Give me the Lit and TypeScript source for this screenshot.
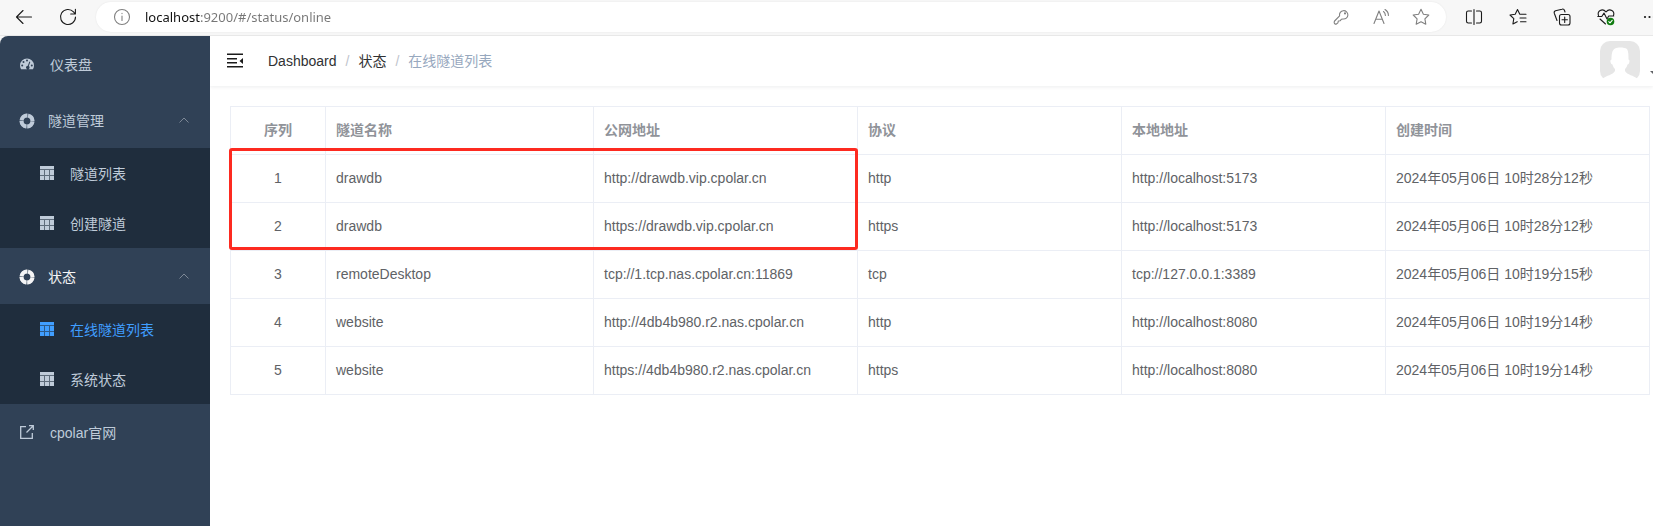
import { LitElement, html, css, svg, nothing } from "lit";
import { customElement, state } from "lit/decorators.js";
import { classMap } from "lit/directives/class-map.js";

const CJK = css`"Liberation Sans", "Noto Sans CJK SC", sans-serif`;

const gridIcon = html`<svg class="icon" width="14" height="14" viewBox="0 0 14 14" aria-hidden="true">
  <path fill="currentColor" opacity=".4" d="M0 0h14v14H0z"/>
  <path fill="currentColor" d="M0 0h14v3H0zM0 4h4v5H0zM5 4h4v5H5zM10 4h4v5h-4zM0 10h4v4H0zM5 10h4v4H5zM10 10h4v4h-4z"/>
</svg>`;

const ringIcon = html`<svg class="icon" width="16" height="16" viewBox="0 0 16 16" aria-hidden="true">
  <circle cx="8" cy="8" r="5.500" fill="none" stroke="currentColor" stroke-width="4" opacity=".4"/>
  <circle cx="8" cy="8" r="5.500" fill="none" stroke="currentColor" stroke-width="4" stroke-dasharray="7.640 1" stroke-dashoffset="-.5"/>
</svg>`;

const gaugeIcon = html`<svg class="icon" width="14" height="14" viewBox="0 0 14 14" aria-hidden="true">
  <path fill="currentColor" fill-rule="evenodd" d="M7 1.400a7 7 0 0 0-7 7c0 1.500.4 2.800 1.100 3.900h11.800A7 7 0 0 0 14 8.400a7 7 0 0 0-7-7zM7 2.600a1 1 0 1 1 0 2 1 1 0 0 1 0-2zM3.500 4a1 1 0 1 1 0 2 1 1 0 0 1 0-2zM2.200 7.500a1 1 0 1 1 0 2 1 1 0 0 1 0-2zM11.800 7.500a1 1 0 1 1 0 2 1 1 0 0 1 0-2zM9.400 4.600l.9.400-1.500 4a1.800 1.800 0 1 1-1-.3z"/>
</svg>`;

const linkIcon = html`<svg class="icon" width="14" height="14" viewBox="0 0 14 14" aria-hidden="true">
  <path fill="none" stroke="currentColor" stroke-width="1.300" d="M6 1.700H.7v11.600h11.600V8M6.500 7.500L13 1M9 .7h4.300V5"/>
</svg>`;

const chevron = html`<svg class="chevron" width="10" height="6" viewBox="0 0 10 6" aria-hidden="true">
  <path fill="none" stroke="currentColor" d="M.5 5.500L5 1l4.500 4.500"/>
</svg>`;

const stroke = (body: unknown) => html`<svg width="20" height="20" viewBox="0 0 20 20" fill="none" stroke="currentColor" stroke-width="1.100" stroke-linecap="round" stroke-linejoin="round" aria-hidden="true">${body}</svg>`;

@customElement("browser-bar")
export class BrowserBar extends LitElement {
  static styles = css`
    :host { display: block; background: #f7f7f7; border-bottom: 1px solid #e8e8e8; }
    .bar { display: flex; align-items: center; height: 35px; padding: 0 0 1px 14px; overflow: hidden; box-sizing: border-box; }
    button { display: flex; flex: none; border: 0; padding: 0; background: none; color: #1b1b1b; }
    .back { margin-right: 24px; }
    .reload { margin-right: 18px; }
    .address { display: flex; align-items: center; flex: 1; min-width: 0; height: 30px; border-radius: 15px; background: #fff; padding: 0 15px 0 16px; box-shadow: 0 0 2px rgba(0, 0, 0, 0.08); box-sizing: border-box; }
    .address button { color: #808080; margin-left: 20px; }
    .address .info { margin-left: 0; }
    input { flex: 1; min-width: 0; border: 0; outline: 0; padding: 0; margin-left: 13px; height: 24px; font: 13px/24px "Noto Sans", "Open Sans", sans-serif; color: #6e6e6e; background: linear-gradient(90deg, #111 56px, #767676 56px); -webkit-background-clip: text; background-clip: text; -webkit-text-fill-color: transparent; }
    .tools { display: flex; flex: none; gap: 24px; margin-left: 18px; width: 189px; overflow: hidden; }
  `;
  render() {
    return html`<div class="bar">
      <button class="back" aria-label="Back">${stroke(svg`<path d="M17.500 10H2.500M9 3.500L2.500 10 9 16.500"/>`)}</button>
      <button class="reload" aria-label="Reload">${stroke(svg`<path d="M17.500 10a7.500 7.500 0 1 1-2-5.100L17.300 7M17.400 2.300V7h-4.700"/>`)}</button>
      <div class="address">
        <button class="info" aria-label="Site information">${stroke(svg`<circle cx="10" cy="10" r="7.500"/><path d="M10 9v4.500M10 6.300v.3"/>`)}</button>
        <input aria-label="Address" value="localhost:9200/#/status/online" />
        <button aria-label="Passwords">${stroke(svg`<path d="M8.600 8.800A4.200 4.200 0 1 1 12 12l-1.500.2-1.400 1.600-1.800.2-.4 1.900-1.500 1.100c-1 .5-2.600-.6-2.200-2l.4-1z"/><circle cx="14" cy="6.400" r=".5"/>`)}</button>
        <button aria-label="Read aloud">${stroke(svg`<path d="M3 16.500L8 4l5 12.500M4.800 12.200h6.400M12.500 4.500c1.300 1 1.900 2.300 1.900 4M14 2.500c2.300 1.500 3.500 3.500 3.400 6"/>`)}</button>
        <button aria-label="Add to favorites">${stroke(svg`<path d="M10 2.300l2.400 4.900 5.400.8-3.900 3.800.9 5.400-4.800-2.500-4.800 2.500.9-5.400L2.200 8l5.400-.8z"/>`)}</button>
      </div>
      <div class="tools">
        <button aria-label="Split screen">${stroke(svg`<path d="M7.500 4H4.200A1.700 1.700 0 0 0 2.500 5.700v8.600A1.700 1.700 0 0 0 4.200 16h3.300M12.500 4h3.300a1.700 1.700 0 0 1 1.700 1.700v8.600a1.700 1.700 0 0 1-1.700 1.700h-3.300M10 2.500v15"/>`)}</button>
        <button aria-label="Favorites">${stroke(svg`<path d="M12 7.200h-.2L9.500 2.500 7.200 7.200l-5.200.8 3.800 3.700-.9 5.300 4.300-2.300M12.500 7.200h5.500M12 11h6M12.500 14.800H18"/>`)}</button>
        <button aria-label="Collections">${stroke(svg`<rect x="7.500" y="7.500" width="10.500" height="10.500" rx="2"/><path d="M12.700 10v5.400M10 12.700h5.400M5 13.500l-2.700-7.300a2 2 0 0 1 1.200-2.500l6.500-1.500a2 2 0 0 1 2.500 1.300l.5 1.500"/>`)}</button>
        <button aria-label="Browser essentials">${stroke(svg`<path d="M2.500 8.500C1 4.500 6 .5 10 4.800c4-4.300 9-.3 7.500 3.700M1.800 9.500h4L8 6l3 6 1.700-3h5M4 12l5.500 5"/><circle cx="14.500" cy="14.500" r="3.800" fill="#107c10" stroke="none"/><path d="M12.800 14.600l1.200 1.200 2.200-2.400" stroke="#fff"/>`)}</button>
        <button aria-label="More">${stroke(svg`<path stroke-width="2.200" d="M5 10h.01M9.500 10h.01M14 10h.01"/>`)}</button>
      </div>
    </div>`;
  }
}

interface Item { label: string; active?: boolean; }
interface Group { label: string; current?: boolean; items: Item[]; }

@customElement("side-menu")
export class SideMenu extends LitElement {
  @state() private closed = new Set<string>();
  private groups: Group[] = [
    { label: "隧道管理", items: [{ label: "隧道列表" }, { label: "创建隧道" }] },
    { label: "状态", current: true, items: [{ label: "在线隧道列表", active: true }, { label: "系统状态" }] },
  ];
  static styles = css`
    :host { display: block; flex: none; width: 210px; background: #304156; border-top-left-radius: 8px; font: 14px/20px ${CJK}; color: #bfcbd9; }
    a, button { display: flex; align-items: center; box-sizing: border-box; width: 100%; border: 0; background: none; color: inherit; font: inherit; text-decoration: none; text-align: left; }
    span { padding-top: 2px; }
    .top { height: 56px; padding: 0 20px; gap: 16px; }
    .group { height: 56px; padding: 0 21px 0 19px; gap: 13px; }
    .group .icon { padding-top: 1px; }
    .group .chevron { margin-left: auto; color: #7d8896; }
    .current { color: #f4f4f5; }
    .sub { background: #1f2d3d; }
    .sub a { height: 50px; padding: 0 20px 0 40px; gap: 16px; }
    .sub .active { color: #409eff; }
    .icon { flex: none; }
  `;
  private toggle(label: string) {
    const next = new Set(this.closed);
    if (!next.delete(label)) next.add(label);
    this.closed = next;
  }
  render() {
    return html`<nav>
      <a class="top" href="#/dashboard">${gaugeIcon}<span>仪表盘</span></a>
      ${this.groups.map((g) => html`
        <button class=${classMap({ group: true, current: !!g.current })} @click=${() => this.toggle(g.label)}>${ringIcon}<span>${g.label}</span>${chevron}</button>
        ${this.closed.has(g.label) ? nothing : html`<div class="sub">${g.items.map((i) => html`<a class=${classMap({ active: !!i.active })} href="#/">${gridIcon}<span>${i.label}</span></a>`)}</div>`}
      `)}
      <a class="top" href="#/">${linkIcon}<span>cpolar官网</span></a>
    </nav>`;
  }
}

@customElement("top-nav")
export class TopNav extends LitElement {
  static styles = css`
    :host { display: flex; align-items: center; height: 50px; padding-left: 15px; background: #fff; box-shadow: 0 1px 4px rgba(0, 21, 41, 0.08); font: 14px/20px ${CJK}; color: #303133; clip-path: inset(0 0 -6px 0); }
    button { display: flex; border: 0; padding: 0; background: none; color: #1b1b1b; }
    ol { display: flex; margin: 0 0 0 23px; padding: 0; list-style: none; }
    li + li::before { content: "/"; margin: 0 9px; color: #c0c4cc; }
    a { color: inherit; text-decoration: none; }
    .here { color: #97a8be; }
    .user { margin-left: auto; align-items: flex-end; flex: none; }
    .caret { margin: 0 0 7px 10px; }
  `;
  render() {
    return html`
      <button aria-label="Toggle sidebar"><svg width="20" height="20" viewBox="0 0 20 20" aria-hidden="true"><path fill="currentColor" d="M2 2.500h16V4H2zM2 7h10v1.500H2zM2 11h10v1.500H2zM2 15h16v1.500H2zM18 7v6l-3.500-3z"/></svg></button>
      <ol>
        <li><a href="#/dashboard">Dashboard</a></li>
        <li><a href="#/status">状态</a></li>
        <li class="here">在线隧道列表</li>
      </ol>
      <button class="user" aria-label="Account">
        <svg width="40" height="40" viewBox="0 0 40 40" aria-hidden="true"><rect width="40" height="40" rx="10" fill="#e6e6e6"/><path fill="#fff" d="M15 7.500C18 6 24 6 27 8c1.500 2.500 1.500 6 1.500 10.500 1 .3 1.200 1.500.8 2.700-.4 1.300-.9 2.300-1.800 2.300-.5 2-1.500 3.500-2.500 4.500v2c2 4 9 4.500 12 7.500V41H3v-3.500c3-3 10-3.500 12-7.500v-2c-1-1-2-2.500-2.500-4.500-.9 0-1.500-1-1.900-2.300-.4-1.200-.1-2.400.9-2.700 0-5 .5-9.500 3.500-11z"/></svg>
        <svg class="caret" width="3" height="3" viewBox="0 0 3 3" aria-hidden="true"><path fill="#606266" d="M0 0h6L3 3z"/></svg>
      </button>`;
  }
}

@customElement("tunnel-table")
export class TunnelTable extends LitElement {
  private rows = [
    ["drawdb", "http://drawdb.vip.cpolar.cn", "http", "http://localhost:5173", "2024年05月06日 10时28分12秒"],
    ["drawdb", "https://drawdb.vip.cpolar.cn", "https", "http://localhost:5173", "2024年05月06日 10时28分12秒"],
    ["remoteDesktop", "tcp://1.tcp.nas.cpolar.cn:11869", "tcp", "tcp://127.0.0.1:3389", "2024年05月06日 10时19分15秒"],
    ["website", "http://4db4b980.r2.nas.cpolar.cn", "http", "http://localhost:8080", "2024年05月06日 10时19分14秒"],
    ["website", "https://4db4b980.r2.nas.cpolar.cn", "https", "http://localhost:8080", "2024年05月06日 10时19分14秒"],
  ];
  static styles = css`
    :host { display: block; position: relative; font: 14px/23px ${CJK}; color: #606266; }
    table { width: 100%; table-layout: fixed; border-collapse: separate; border-spacing: 0; border: solid #ebeef5; border-width: 1px 0 0 1px; }
    th, td { box-sizing: border-box; height: 48px; padding: 0 10px; text-align: left; border: solid #ebeef5; border-width: 0 1px 1px 0; }
    th { color: #909399; font-weight: 700; }
    .index { width: 95px; text-align: center; }
    .name { width: 268px; }
    .url { width: 264px; }
    .mark { position: absolute; top: 42px; left: -1px; width: 629px; height: 102px; box-sizing: border-box; border: 3px solid #fd2a20; border-radius: 3px; pointer-events: none; }
  `;
  render() {
    return html`<table>
      <thead><tr><th class="index">序列</th><th class="name">隧道名称</th><th class="url">公网地址</th><th>协议</th><th>本地地址</th><th>创建时间</th></tr></thead>
      <tbody>${this.rows.map((r, i) => html`<tr><td class="index">${i + 1}</td>${r.map((c) => html`<td>${c}</td>`)}</tr>`)}</tbody>
    </table><div class="mark"></div>`;
  }
}

@customElement("app-root")
export class AppRoot extends LitElement {
  static styles = css`
    :host { display: flex; flex-direction: column; min-height: 100vh; background: #fff; }
    .body { display: flex; flex: 1; background: linear-gradient(90deg, #f7f7f7 20px, #fff 20px); }
    main { flex: 1; min-width: 0; }
    .content { padding: 20px 3px 20px 20px; }
  `;
  render() {
    return html`<browser-bar></browser-bar>
      <div class="body"><side-menu></side-menu>
        <main><top-nav></top-nav><div class="content"><tunnel-table></tunnel-table></div></main>
      </div>`;
  }
}
